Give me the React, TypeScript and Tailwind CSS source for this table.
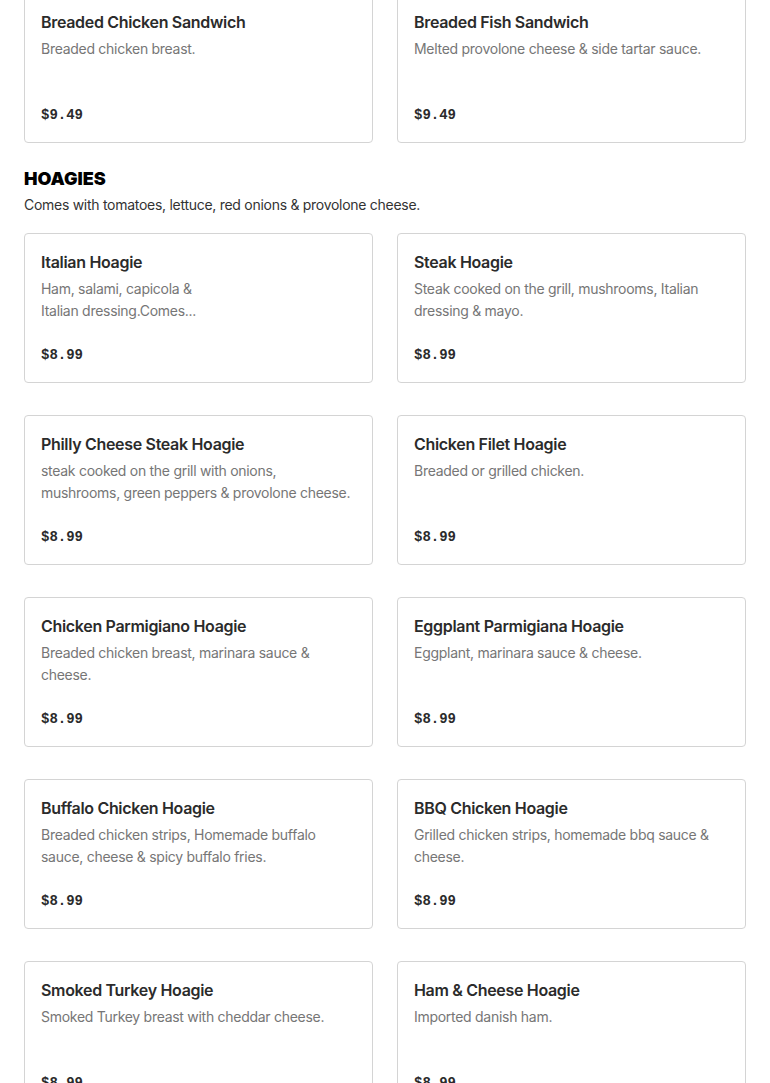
const topItems = [
  { name: "Breaded Chicken Sandwich", desc: "Breaded chicken breast.", price: "$9.49" },
  { name: "Breaded Fish Sandwich", desc: "Melted provolone cheese & side tartar sauce.", price: "$9.49" },
];

const hoagies = [
  { name: "Italian Hoagie", desc: "Ham, salami, capicola &\nItalian dressing.Comes...", price: "$8.99" },
  { name: "Steak Hoagie", desc: "Steak cooked on the grill, mushrooms, Italian dressing & mayo.", price: "$8.99" },
  { name: "Philly Cheese Steak Hoagie", desc: "steak cooked on the grill with onions, mushrooms, green peppers & provolone cheese.", price: "$8.99" },
  { name: "Chicken Filet Hoagie", desc: "Breaded or grilled chicken.", price: "$8.99" },
  { name: "Chicken Parmigiano Hoagie", desc: "Breaded chicken breast, marinara sauce & cheese.", price: "$8.99" },
  { name: "Eggplant Parmigiana Hoagie", desc: "Eggplant, marinara sauce & cheese.", price: "$8.99" },
  { name: "Buffalo Chicken Hoagie", desc: "Breaded chicken strips, Homemade buffalo sauce, cheese & spicy buffalo fries.", price: "$8.99" },
  { name: "BBQ Chicken Hoagie", desc: "Grilled chicken strips, homemade bbq sauce & cheese.", price: "$8.99" },
  { name: "Smoked Turkey Hoagie", desc: "Smoked Turkey breast with cheddar cheese.", price: "$8.99" },
  { name: "Ham & Cheese Hoagie", desc: "Imported danish ham.", price: "$8.99" },
];

type Item = { name: string; desc: string; price: string };

function ItemCard({ item }: { item: Item }) {
  return (
    <div className="flex h-[150px] flex-col rounded-[4px] border border-[#d4d4d4] bg-white px-4 pt-4 pb-4">
      <h3 className="text-[16px] leading-[24px] font-semibold tracking-[-0.02em] text-[#2b2b2b]">{item.name}</h3>
      <p className="mt-[4px] whitespace-pre-line text-[14px] leading-[22px] tracking-[-0.02em] text-[#767676]">
        {item.desc}
      </p>
      <p className="mt-auto font-['Liberation_Mono',monospace] text-[14px] leading-[22px] font-bold text-[#2b2b2b]">
        {item.price}
      </p>
    </div>
  );
}

export default function App() {
  return (
    <div className="min-h-screen overflow-hidden bg-white px-6 font-['Inter',sans-serif]">
      {/* Sandwiches (scrolled partly out of view) */}
      <div className="-mt-[7px] grid grid-cols-2 gap-6">
        {topItems.map((item) => (
          <ItemCard key={item.name} item={item} />
        ))}
      </div>

      {/* Hoagies */}
      <section className="mt-[24px]">
        <h2 className="text-[18px] leading-[24px] font-black text-black">HOAGIES</h2>
        <p className="mt-[4px] text-[14px] leading-[20px] tracking-[-0.02em] text-[#333]">
          Comes with tomatoes, lettuce, red onions & provolone cheese.
        </p>
        <div className="mt-[18px] grid grid-cols-2 gap-x-6 gap-y-8 pb-10">
          {hoagies.map((item) => (
            <ItemCard key={item.name} item={item} />
          ))}
        </div>
      </section>
    </div>
  );
}
